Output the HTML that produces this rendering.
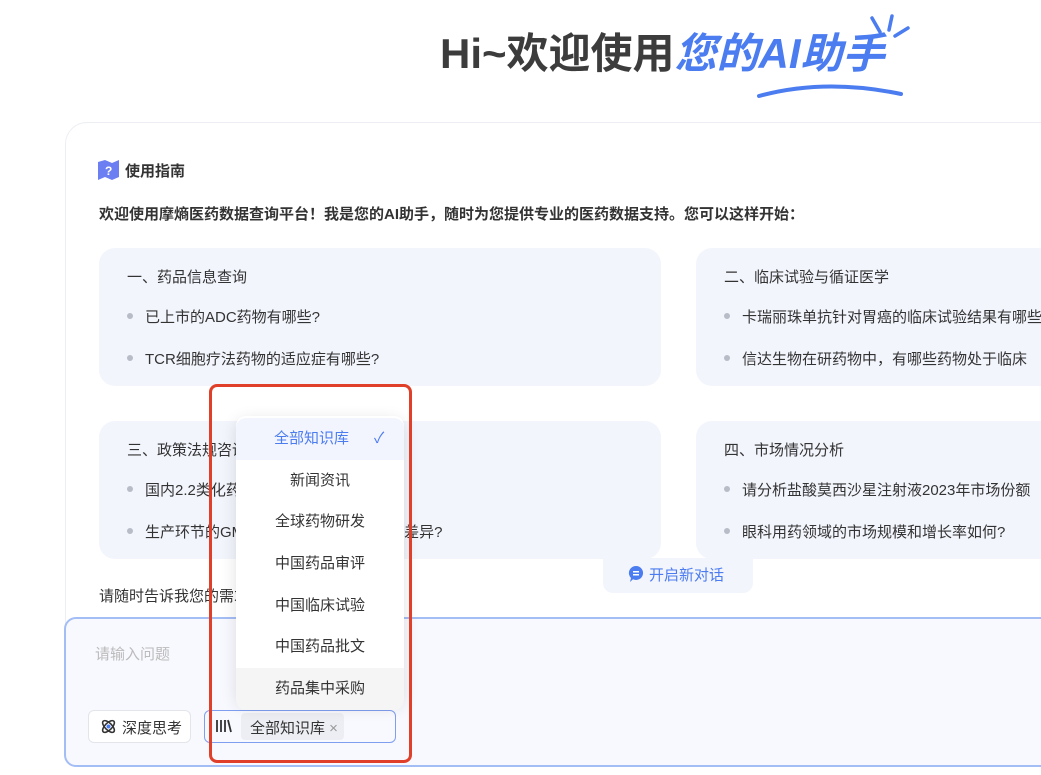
<!DOCTYPE html>
<html><head><meta charset="utf-8"><style>
*{margin:0;padding:0;box-sizing:border-box}
html,body{width:1041px;height:775px;overflow:hidden}
body{background:#fff;font-family:"Liberation Sans","Noto Sans CJK SC",sans-serif;color:#333;position:relative}
.abs{position:absolute}
.title{left:440px;top:24px;font-size:42px;font-weight:bold;color:#3c3c3c;white-space:nowrap;line-height:60px}
.title span{color:#4b7cf0;font-style:italic}
.outer{left:65px;top:122px;width:1000px;height:640px;border:1px solid #eceef3;border-radius:22px;background:#fff}
.card{background:#f3f5fd;border-radius:16px;width:562px;height:138px}
.card .h{position:absolute;left:28px;top:18px;font-size:15px;color:#333}
.card .li{position:absolute;left:28px;font-size:15px;color:#333;white-space:nowrap}
.card .li:before{content:"";display:inline-block;width:6px;height:6px;border-radius:50%;background:#b8bcc6;margin-right:12px;vertical-align:middle;position:relative;top:-2px}
.input{left:64px;top:617px;width:1000px;height:150px;border:2px solid #a3bdf5;border-radius:12px;background:#f8f9fe}
.dd{left:236px;top:416px;width:168px;height:287px;background:#fff;border-radius:10px;box-shadow:0 4px 16px rgba(0,0,0,.12);padding-top:2px}
.dd div{height:41.7px;line-height:41.7px;text-align:center;font-size:15px;color:#333}
</style></head><body>
<div class="abs title">Hi~欢迎使用<span>您的AI助手</span></div>
<svg class="abs" style="left:755px;top:10px" width="160" height="95"><path d="M4 86 Q70 68 146 84" stroke="#4b7cf0" stroke-width="4" fill="none" stroke-linecap="round"/><path d="M117 8 L125 22 M137 6 L134 20 M153 18 L140 26" stroke="#4b7cf0" stroke-width="3.5" stroke-linecap="round"/></svg>
<div class="abs outer"></div>
<svg class="abs" style="left:98px;top:160px" width="22" height="20"><path d="M0 2 L7 0 L14 3 L21 0 L21 17 L14 20 L7 17 L0 20Z" fill="#6b7ff2"/><text x="7" y="15" font-size="12" font-weight="bold" fill="#fff" font-family="Liberation Sans">?</text></svg>
<div class="abs" style="left:125px;top:160px;font-size:15px;font-weight:bold;color:#333">使用指南</div>
<div class="abs" style="left:99px;top:203px;font-size:15px;font-weight:bold;color:#333;white-space:nowrap">欢迎使用摩熵医药数据查询平台！我是您的AI助手，随时为您提供专业的医药数据支持。您可以这样开始：</div>
<div class="abs card" style="left:99px;top:248px"><div class="h">一、药品信息查询</div><div class="li" style="top:58px">已上市的ADC药物有哪些?</div><div class="li" style="top:100px">TCR细胞疗法药物的适应症有哪些?</div></div>
<div class="abs card" style="left:696px;top:248px"><div class="h">二、临床试验与循证医学</div><div class="li" style="top:58px">卡瑞丽珠单抗针对胃癌的临床试验结果有哪些</div><div class="li" style="top:100px">信达生物在研药物中，有哪些药物处于临床</div></div>
<div class="abs card" style="left:99px;top:421px"><div class="h">三、政策法规咨询</div><div class="li" style="top:58px">国内2.2类化药</div><div class="li" style="top:100px">生产环节的GMP要求在中美之间有哪些差异?</div></div>
<div class="abs card" style="left:696px;top:421px"><div class="h">四、市场情况分析</div><div class="li" style="top:58px">请分析盐酸莫西沙星注射液2023年市场份额</div><div class="li" style="top:100px">眼科用药领域的市场规模和增长率如何?</div></div>
<div class="abs" style="left:99px;top:585px;font-size:15px;color:#333">请随时告诉我您的需求，我将为您提供支持!</div>
<div class="abs" style="left:603px;top:558px;width:150px;height:35px;background:#f3f5fd;border-radius:0 0 10px 10px"></div>
<svg class="abs" style="left:628px;top:565px" width="16" height="18"><path d="M8 1a7 7 0 1 1-3 13.3L2 17l1-4A7 7 0 0 1 8 1z" fill="#4b7cf0"/><rect x="5" y="6" width="6" height="1.5" fill="#fff"/><rect x="5" y="9" width="6" height="1.5" fill="#fff"/></svg>
<div class="abs" style="left:649px;top:564px;font-size:15px;color:#4b7cf0">开启新对话</div>
<div class="abs input"></div>
<div class="abs" style="left:95px;top:643px;font-size:15px;color:#bbb">请输入问题</div>
<div class="abs" style="left:88px;top:710px;width:103px;height:33px;border:1px solid #e3e5ea;border-radius:6px;background:#fff"></div>
<svg class="abs" style="left:100px;top:718px" width="17" height="17"><ellipse cx="8.5" cy="8.5" rx="7.5" ry="3.5" transform="rotate(45 8.5 8.5)" fill="none" stroke="#333" stroke-width="1.6"/><ellipse cx="8.5" cy="8.5" rx="7.5" ry="3.5" transform="rotate(-45 8.5 8.5)" fill="none" stroke="#333" stroke-width="1.6"/><circle cx="8.5" cy="8.5" r="2" fill="#4b7cf0"/></svg>
<div class="abs" style="left:122px;top:717px;font-size:15px;color:#333">深度思考</div>
<div class="abs" style="left:204px;top:710px;width:192px;height:33px;border:1px solid #7f9ef0;border-radius:6px;background:#f8f9fe"></div>
<svg class="abs" style="left:215px;top:718px" width="17" height="16"><path d="M2 2v12M6 2v12M10 2v12M13 2l3 12" stroke="#333" stroke-width="1.8" fill="none"/></svg>
<div class="abs" style="left:241px;top:713px;width:103px;height:27px;background:#eceef3;border-radius:4px"></div>
<div class="abs" style="left:250px;top:717px;font-size:15px;color:#333">全部知识库 <span style="color:#999">×</span></div>
<div class="abs dd">
<div style="color:#4b7cf0;background:#f3f5fe;border-radius:10px 10px 0 0;text-align:left;padding-left:38px">全部知识库<span style="position:absolute;left:138px">✓</span></div>
<div>新闻资讯</div><div>全球药物研发</div><div>中国药品审评</div><div>中国临床试验</div><div>中国药品批文</div><div style="background:#f5f5f5;border-radius:0 0 10px 10px">药品集中采购</div>
</div>
<div class="abs" style="left:209px;top:384px;width:203px;height:379px;border:3px solid #e0402a;border-radius:8px"></div>
</body></html>
